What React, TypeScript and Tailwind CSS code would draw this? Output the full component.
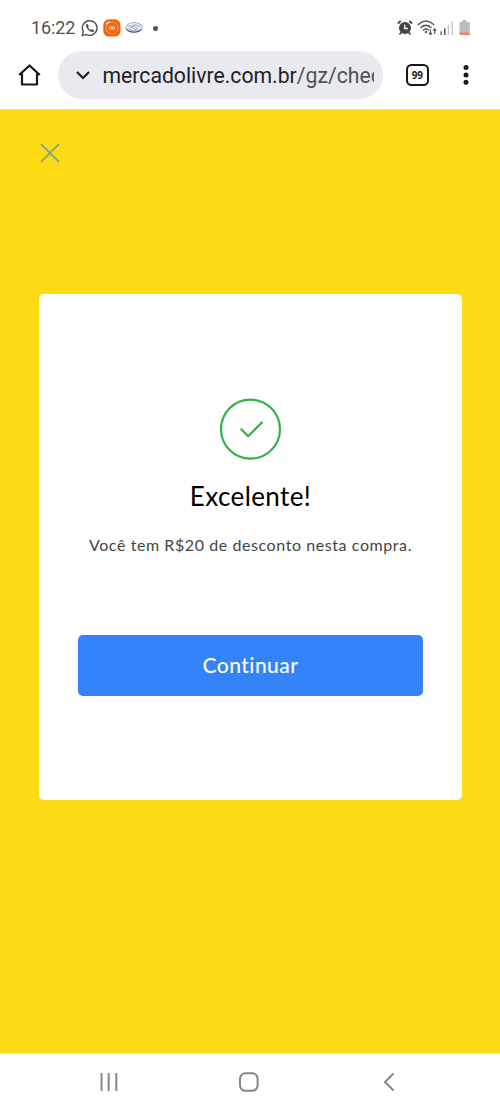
import React from 'react';

function StatusBar() {
  return (
    <div className="flex h-[51px] items-center pt-[5px] pl-[31px] text-[#505050]">
      <span className="w-[45px] text-[18px] leading-none tracking-[-0.1px] whitespace-nowrap">16:22</span>
      <svg className="ml-[5px]" width="18" height="18" viewBox="0 0 18 18" fill="none">
        <path d="M1.2 16.6l1.1-4.1a7.3 7.3 0 1 1 2.9 2.9z" stroke="#505050" strokeWidth="1.4" strokeLinejoin="round" />
        <path d="M6.3 4.8c-1 .3-1.5 1.3-1.2 2.5.6 2.7 3.2 5.3 5.8 5.8 1.2.2 2.2-.5 2.3-1.7L11.1 10l-1.1 1.1C8.6 10.5 7.6 9.4 7 8.2l.9-1z" fill="#505050" />
      </svg>
      <svg className="ml-[4px]" width="18" height="18" viewBox="0 0 18 18" fill="none">
        <rect x=".3" y=".3" width="17.2" height="17.2" rx="5.5" fill="#f5630b" />
        <circle cx="9" cy="9" r="6" stroke="#ffad79" strokeWidth=".8" />
        <path d="M3.2 5.5Q4.3 3.5 6.3 2.9" stroke="#fff" strokeWidth="1.2" />
        <path d="M6.5 7.7h2v2.4h-2zM9.5 7.7h2v2.4h-2z" stroke="#ffe2cd" strokeWidth=".8" />
      </svg>
      <svg className="ml-[4px]" width="18" height="14" viewBox="0 0 18 14" fill="none">
        <ellipse cx="9" cy="6.5" rx="8.2" ry="5" fill="#eceff5" stroke="#959db8" strokeWidth=".8" />
        <path d="M2.5 4.500c2 1 3.500.6 5-.1 1.500-.8 3-.5 4 .1 1.500.6 3 .6 4.200-.2M5 7l2-1 4 3M7.500 6l2-1 3 2.500M4 7.500l3 2.200 2 .5 2-1 2-1.500" stroke="#7782a4" strokeWidth=".7" />
        <path d="M1.5 8.500Q9 14 16.500 8.500" stroke="#414e7b" strokeWidth="1.1" />
      </svg>
      <span className="ml-[10px] size-[5px] rounded-full bg-[#555]" />
      <svg className="ml-[239px]" width="16" height="16" viewBox="0 0 16 16" fill="none">
        <path d="M1 3.5L3.7 1M15 3.5L12.3 1M4.2 12.5L2.5 14.5M11.8 12.5l1.7 2" stroke="#444" strokeWidth="1.8" />
        <circle cx="8" cy="8" r="6" fill="#444" />
        <path d="M7.7 4.5v4H11" stroke="#fff" strokeWidth="1.3" />
      </svg>
      <svg className="ml-[4px]" width="21" height="18" viewBox="0 0 21 18" fill="none">
        <path d="M1.3 5.5Q9 -1.5 16.7 5.5M4 8.5q5-4.2 10 0M6.5 11q2.5-1.8 5 0" stroke="#555" strokeWidth="1.5" strokeLinecap="round" />
        <circle cx="9" cy="13" r="1.2" fill="#555" />
        <path d="M13.5 10.500v5m-1.600-1.700 1.600 1.700 1.600-1.700M17.700 15V10m-1.600 1.700 1.600-1.700 1.600 1.700" stroke="#555" strokeWidth="1.2" />
      </svg>
      <svg className="ml-[2px]" width="14" height="14" viewBox="0 0 14 14">
        <path d="M.5 10.300h1.300v3.700H.5zM4 7.200h1.500V14H4z" fill="#505050" />
        <path d="M7.700 4h1.300v10H7.700zM11.500 0h1.300v14h-1.300z" fill="#c0c0c0" />
      </svg>
      <svg className="ml-[5px]" width="11" height="16" viewBox="0 0 11 16">
        <path d="M3.500 0h4v2H10q.8 0 .8 .8V13H.5V2.800Q.5 2 1.300 2h2.200z" fill="#bdbdbd" />
        <path d="M.5 12.500h10.300v2q0 .6-.6 .6H1.100q-.6 0-.6-.6z" fill="#f38068" />
      </svg>
    </div>
  );
}

function BrowserBar() {
  return (
    <div className="flex h-[58px] items-start pl-[18px]">
      <svg className="mt-[12px]" width="23" height="23" viewBox="0 0 23 23" fill="none">
        <path d="M1.2 12L11.500 2.500 21.800 12M4 10.500v11h15v-11" stroke="#17181b" strokeWidth="2.2" strokeLinejoin="round" />
      </svg>
      <div className="ml-[17px] flex h-12 w-[325px] items-center rounded-full bg-[#e9eaef] pl-[18px]">
        <svg width="14" height="9" viewBox="0 0 14 9" fill="none">
          <path d="M1 1l6 6 6-6" stroke="#202124" strokeWidth="2.2" />
        </svg>
        <div className="ml-[12.5px] w-[271.5px] overflow-hidden pt-[1px] text-[21.2px] leading-[28px] whitespace-nowrap text-[#1e2026]">
          mercadolivre.com.br<span className="text-[#50525a]">/gz/chec</span>
        </div>
      </div>
      <div className="mt-[13px] ml-[23px] flex h-[22px] w-[23px] items-center justify-center rounded-[5.5px] border-[2px] border-[#17181b] font-['Noto_Sans',sans-serif] text-[11px] leading-[14px] font-bold text-[#17181b]"><span className="scale-x-90">99</span></div>
      <svg className="mt-[13px] ml-[33px]" width="8" height="22" viewBox="0 0 8 22" fill="#17181b">
        <circle cx="4" cy="3.5" r="2.5" />
        <circle cx="4" cy="10.9" r="2.5" />
        <circle cx="4" cy="18.2" r="2.5" />
      </svg>
    </div>
  );
}

function NavigationBar() {
  return (
    <div className="flex h-[58.5px] items-center border-t border-[#e5e3d0] bg-white pl-[99px]">
      <svg width="20" height="20" viewBox="0 0 20 20" fill="none">
        <path d="M2.5 1v18M9.7 1v18M17.3 1v18" stroke="#878787" strokeWidth="2" />
      </svg>
      <svg className="ml-[120px]" width="20" height="20" viewBox="0 0 20 20" fill="none">
        <rect x="1" y="1.2" width="17.6" height="17.6" rx="5.5" stroke="#878787" strokeWidth="2" />
      </svg>
      <svg className="ml-[124px]" width="12" height="20" viewBox="0 0 12 20" fill="none">
        <path d="M10.5 1.500L2 10l8.500 8.500" stroke="#878787" strokeWidth="2" />
      </svg>
    </div>
  );
}

export default function App() {
  return (
    <div className="flex h-[1111px] w-[500px] flex-col overflow-hidden bg-white font-['Roboto',sans-serif]">
      <header className="h-[110px] border-b border-[#e9e3bd]">
        <StatusBar />
        <BrowserBar />
      </header>
      <main className="flex flex-1 flex-col bg-[#ffdb15] px-[39px] font-['Lato',sans-serif]">
        <button className="mt-[32px] flex size-[22px] items-center justify-center" aria-label="Fechar">
          <svg width="20" height="20" viewBox="0 0 20 20" fill="none">
            <path d="M1 1l18 18M19 1L1 19" stroke="#89a777" strokeWidth="1.8" />
          </svg>
        </button>
        <section className="mt-[130px] flex h-[506px] w-[423px] flex-col items-center rounded-[5px] bg-white pt-[104px]">
          <svg width="62" height="62" viewBox="0 0 62 62" fill="none">
            <circle cx="30.5" cy="31.2" r="29.5" stroke="#36b24a" strokeWidth="2.2" />
            <path d="M20.700 30.700l7.500 7.500L42.500 23.900" stroke="#36b24a" strokeWidth="2.2" />
          </svg>
          <h1 className="mt-[20px] text-[26px] leading-[32px] tracking-[0.4px] text-black">Excelente!</h1>
          <p className="mt-[21px] text-[16px] leading-[24px] tracking-[0.58px] whitespace-nowrap text-[#444]">Você tem R$20 de desconto nesta compra.</p>
          <button className="mt-[77.5px] h-[61px] w-[345px] rounded-[5px] bg-[#3483fa] text-[21px] font-medium tracking-[0.45px] text-white [font-variant-ligatures:none]">Continuar</button>
        </section>
      </main>
      <NavigationBar />
    </div>
  );
}
